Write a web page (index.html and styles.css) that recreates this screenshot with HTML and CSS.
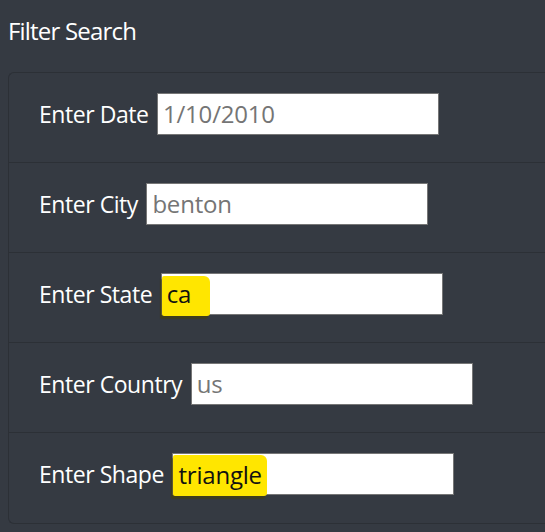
FILE: index.html
```html
<!DOCTYPE html>
<html lang="en">
<head>
<meta charset="utf-8">
<title>Filter Search</title>
<link rel="stylesheet" href="styles.css">
</head>
<body>
  <h5 class="title">Filter Search</h5>
  <div class="card">
    <ul class="list">
      <li class="item">
        <label class="label">Enter Date</label>
        <div class="field"><span class="placeholder">1/10/2010</span></div>
      </li>
      <li class="item">
        <label class="label">Enter City</label>
        <div class="field"><span class="placeholder">benton</span></div>
      </li>
      <li class="item">
        <label class="label">Enter State</label>
        <div class="field"><span class="mark mark-state"></span><span class="value">ca</span></div>
      </li>
      <li class="item">
        <label class="label">Enter Country</label>
        <div class="field"><span class="placeholder">us</span></div>
      </li>
      <li class="item">
        <label class="label">Enter Shape</label>
        <div class="field"><span class="mark mark-shape"></span><span class="value">triangle</span></div>
      </li>
    </ul>
  </div>
</body>
</html>
```

FILE: styles.css
```css
html {
  overflow: hidden;
}

body {
  margin: 0;
  padding: 0 0 0 8px;
  background: #353a42;
  color: #ffffff;
  font-family: "Open Sans", "Noto Sans", sans-serif;
}

.title {
  margin: 0;
  padding-top: 14px;
  height: 72px;
  box-sizing: border-box;
  font-size: 24px;
  font-weight: 400;
  line-height: 34px;
  letter-spacing: -0.8px;
}

.card {
  border: 1px solid #2c3036;
  border-right: none;
  border-radius: 6px 0 0 6px;
  background: #353a42;
}

.list {
  list-style: none;
  margin: 0;
  padding: 0;
}

.item {
  display: flex;
  align-items: center;
  height: 90px;
  padding: 20px 0 28px 30px;
  box-sizing: border-box;
  border-bottom: 1px solid #2c3036;
}

.item:last-child {
  border-bottom: none;
}

.label {
  font-size: 23px;
  letter-spacing: -0.45px;
  margin-right: 8.5px;
  white-space: nowrap;
}

.field {
  position: relative;
  flex: none;
  width: 282px;
  height: 42px;
  box-sizing: border-box;
  border: 1px solid #767676;
  background: #ffffff;
  display: flex;
  align-items: center;
  padding-left: 5px;
  font-size: 24px;
  letter-spacing: -0.2px;
}

.placeholder {
  color: #757575;
}

.value {
  position: relative;
  color: #111111;
}

.mark {
  position: absolute;
  background: #ffe600;
  box-shadow: -2px 3px 1px rgba(70, 64, 0, 0.55);
  border-radius: 2px 6px 3px 2px;
}

.mark-state {
  left: 0;
  top: 2px;
  width: 48px;
  height: 40px;
}

.mark-shape {
  left: 0;
  top: 1px;
  width: 94px;
  height: 41px;
}
```
